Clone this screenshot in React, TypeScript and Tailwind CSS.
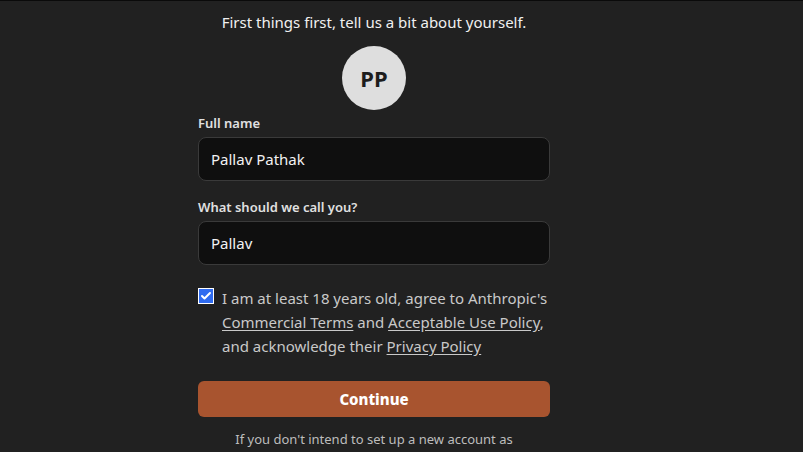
import { Check } from "lucide-react";

export default function App() {
  return (
    <div
      className="w-[803px] h-[452px] overflow-hidden bg-[#212121] border-t border-[#0a0a0a] text-[#e8e8e8]"
      style={{ fontFamily: '"Noto Sans", "Open Sans", sans-serif' }}
    >
      <div className="ml-[198px] w-[352px] flex flex-col">
        <p className="mt-[10px] text-center text-[15px] leading-[22px] text-[#f0f0f0]">
          First things first, tell us a bit about yourself.
        </p>

        <div className="mt-[13px] self-center flex items-center justify-center w-16 h-16 rounded-full bg-[#dedede] text-[#1d1d1d] text-[22px] font-bold">
          PP
        </div>

        <label className="mt-[3px] text-[13px] leading-5 font-semibold text-[#e0e0e0]">
          Full name
        </label>
        <div className="mt-[4px] h-[44px] rounded-lg border border-[#3a3a3a] bg-[#0f0f0f] flex items-center px-3 text-[15px] text-[#f2f2f2]">
          Pallav Pathak
        </div>

        <label className="mt-[16px] text-[13px] leading-5 font-semibold text-[#e0e0e0]">
          What should we call you?
        </label>
        <div className="mt-[4px] h-[44px] rounded-lg border border-[#3a3a3a] bg-[#0f0f0f] flex items-center px-3 text-[15px] text-[#f2f2f2]">
          Pallav
        </div>

        <div className="mt-[21px] flex gap-2">
          <div className="mt-[2px] w-4 h-4 shrink-0 bg-[#2f6bf0] border border-white flex items-center justify-center">
            <Check className="w-3 h-3 text-white" strokeWidth={4} />
          </div>
          <p className="text-[15px] leading-6 text-[#c9c9c9]">
            I am at least 18 years old, agree to Anthropic's{" "}
            <span className="underline underline-offset-2">Commercial Terms</span> and{" "}
            <span className="underline underline-offset-2">Acceptable Use Policy</span>,
            and acknowledge their{" "}
            <span className="underline underline-offset-2">Privacy Policy</span>
          </p>
        </div>

        <button className="mt-[23px] h-9 rounded-md bg-[#a8542f] text-white text-[15px] font-extrabold">
          Continue
        </button>

        <p className="mt-[12px] text-center text-[13px] leading-5 text-[#bdbdbd]">
          If you don't intend to set up a new account as
        </p>
      </div>
    </div>
  );
}
